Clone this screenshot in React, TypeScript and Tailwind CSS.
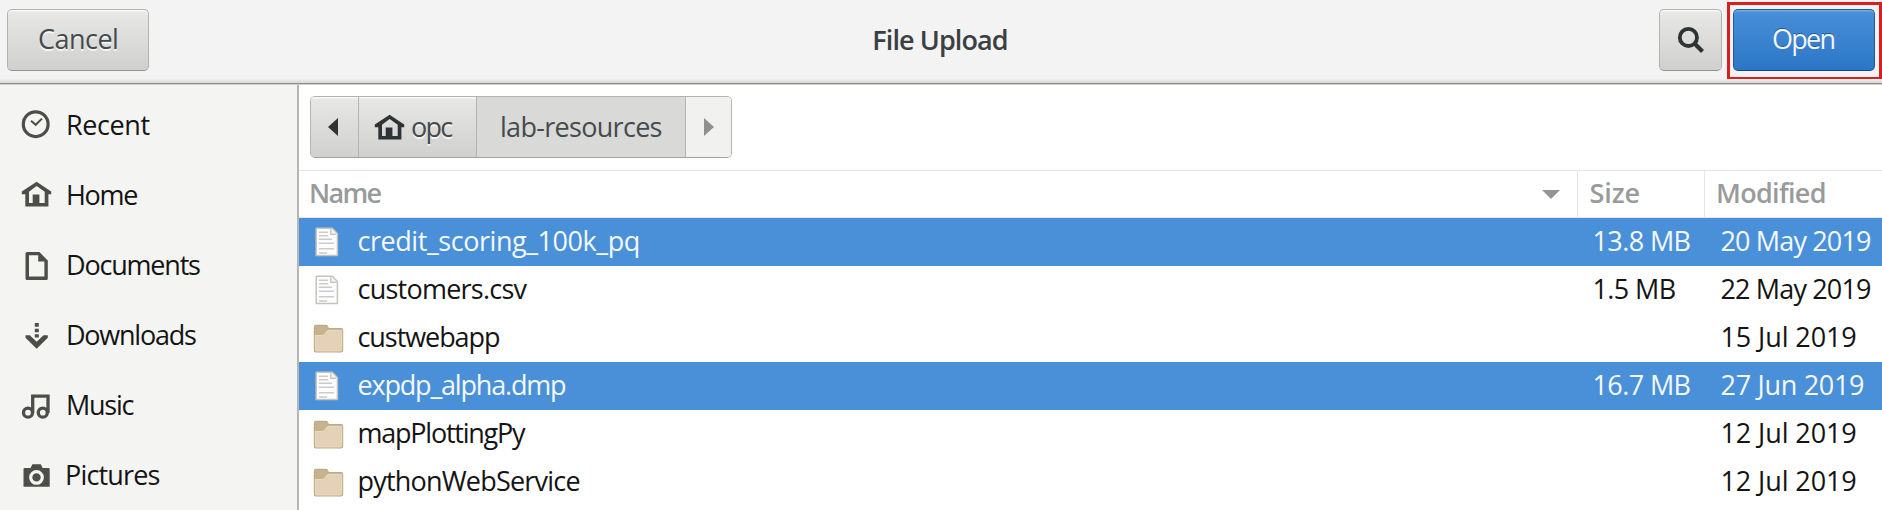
import React from "react";
import type { ReactNode } from "react";

const icon = "block h-[30px] w-[30px] shrink-0 overflow-visible";

const ClockIcon = () => (
  <svg viewBox="0 0 30 30" className={icon} fill="none" stroke="#4d4d4a">
    <circle cx="14.7" cy="15.2" r="12.4" strokeWidth="3.2" />
    <path d="M10 11.8l4.7 4L21 9.6" strokeWidth="2" />
  </svg>
);

const HomeIcon = ({ color = "#4d4d4a" }: { color?: string }) => (
  <svg viewBox="0 0 30 30" className={icon}>
    <path
      fill={color}
      fillRule="evenodd"
      d="M15.6 2.8L30.2 12.4V15.2H27.4V27.5H4.3V15.2H.8V12.4zM15.6 7L8 12.8V24H11.7V15.6H18.4V24H23.7V12.8z"
    />
  </svg>
);

const DocumentIcon = () => (
  <svg viewBox="0 0 30 30" className={icon}>
    <path fill="#4d4d4a" fillRule="evenodd" d="M6 3H18.4L26.8 11.6V29.5Q26.8 31 25.3 31H6Q4.5 31 4.5 29.5V4.5Q4.5 3 6 3zM8 6.3V27.6H23.4V12.4H17.2V6.3z" />
  </svg>
);

const DownloadIcon = () => (
  <svg viewBox="0 0 30 30" className={icon} fill="#4d4d4a">
    <path d="M13.8 3h4v3.8h-4zM13.8 8.7h4v3.6h-4zM13.8 14.2h4v3.4h-4z" />
    <path d="M4.5 15.3H8.8L15.7 21.8L22.5 15.3H26.8V17.7L15.7 28.8L4.5 17.7z" />
  </svg>
);

const MusicIcon = () => (
  <svg viewBox="0 0 30 30" className={icon} fill="none" stroke="#4d4d4a" strokeWidth="3.3">
    <circle cx="7" cy="22.7" r="4.5" />
    <circle cx="21.8" cy="22.7" r="4.5" />
    <path d="M11.7 23V6.2H27V23" />
  </svg>
);

const CameraIcon = () => (
  <svg viewBox="0 0 30 30" className={icon}>
    <path fill="#4d4d4a" d="M3.6 8H9.6L11.4 4.3H19.8L21.6 8H27.6Q28.7 8 28.7 9V26.8H2.5V9Q2.5 8 3.6 8z" />
    <circle cx="15.5" cy="17.4" r="5.8" fill="#4d4d4a" stroke="#f4f4f2" strokeWidth="3.2" />
  </svg>
);

const SearchIcon = () => (
  <svg viewBox="0 0 28 28" className="h-[28px] w-[28px]" fill="none" stroke="#2e3436">
    <circle cx="11.4" cy="11.4" r="8.6" strokeWidth="3.8" />
    <path d="M17.5 17.5L25.5 25.5" strokeWidth="4.2" />
  </svg>
);

const FileIcon = () => (
  <svg viewBox="0 0 30 30" className={icon}>
    <path d="M3.2 1.3H19.3L24.4 6.5V28.6H3.2z" fill="#fdfdfd" stroke="#c3c5bd" strokeWidth="1.5" strokeLinejoin="round" />
    <path d="M17.8 2.2V7.4H23.4" fill="#efefed" stroke="#c3c5bd" strokeWidth="1.3" />
    <path d="M6 5.3h9M6 8.8h9M6 12.3h13M6 16.3h15M6 21.8h15M6 26h8" stroke="#cbcbc9" strokeWidth="1.4" />
  </svg>
);

const FolderIcon = () => (
  <svg viewBox="0 0 30 30" className={icon}>
    <path d="M1.4 4V27Q1.4 29 3.1 29H27.9Q29.6 29 29.6 27V7.4Q29.6 5.6 27.9 5.6H15.7L14.1 3.2Q13.6 2.4 12.7 2.4H3Q1.4 2.4 1.4 4z" fill="#c7b28e" stroke="#bda985" strokeWidth="1.2" />
    <path d="M2.3 12.4H9.1Q10.5 12.4 11.3 11.4L14 8.2Q14.8 7.3 16 7.3H28.7V26.8Q28.7 28 27.5 28H3.5Q2.3 28 2.3 26.8z" fill="#e4d1b6" stroke="#ecdec9" strokeWidth="0.9" />
  </svg>
);

const places: { icon: ReactNode; label: string; style: string }[] = [
  { icon: <ClockIcon />, label: "Recent", style: "tracking-[-0.4px]" },
  { icon: <HomeIcon />, label: "Home", style: "tracking-[-1.3px]" },
  { icon: <DocumentIcon />, label: "Documents", style: "tracking-[-1.2px]" },
  { icon: <DownloadIcon />, label: "Downloads", style: "tracking-[-1.24px]" },
  { icon: <MusicIcon />, label: "Music", style: "tracking-[-1.26px]" },
  { icon: <CameraIcon />, label: "Pictures", style: "-ml-px tracking-[-0.84px]" },
];

type Entry = {
  name: string;
  nameStyle: string;
  size?: string;
  date: string;
  dateStyle: string;
  folder?: boolean;
  selected?: boolean;
};

const entries: Entry[] = [
  { name: "credit_scoring_100k_pq", nameStyle: "tracking-[-0.45px]", size: "13.8 MB", date: "20 May 2019", dateStyle: "tracking-[-0.85px]", selected: true },
  { name: "customers.csv", nameStyle: "tracking-[-0.76px]", size: "1.5 MB", date: "22 May 2019", dateStyle: "tracking-[-0.85px]" },
  { name: "custwebapp", nameStyle: "tracking-[-1.07px]", date: "15 Jul 2019", dateStyle: "tracking-[-0.1px]", folder: true },
  { name: "expdp_alpha.dmp", nameStyle: "tracking-[-1.19px]", size: "16.7 MB", date: "27 Jun 2019", dateStyle: "tracking-[-0.3px]", selected: true },
  { name: "mapPlottingPy", nameStyle: "tracking-[-1.24px]", date: "12 Jul 2019", dateStyle: "tracking-[-0.1px]", folder: true },
  { name: "pythonWebService", nameStyle: "tracking-[-0.8px]", date: "12 Jul 2019", dateStyle: "tracking-[-0.1px]", folder: true },
];

const raised = "bg-linear-to-b from-[#e8e8e6] to-[#d0d0ce]";
const button = `${raised} flex h-[62px] items-center rounded-[5px] border-[1.5px] border-[#b4b4ae] border-b-[#94948e] shadow-[inset_0_1.5px_0_#f8f8f7]`;
const columns = "grid grid-cols-[1278.5px_127px_1fr]";

export default function App() {
  return (
    <div className="flex h-[510px] w-[1882px] flex-col overflow-hidden bg-white font-['Open_Sans',sans-serif] text-[27px] leading-[36px] whitespace-nowrap text-[#141414]">
      <header className="flex h-[85px] shrink-0 flex-col bg-[#f3f3f3] text-[#3a4042]">
        <div className="grid h-[79px] grid-cols-[1fr_auto_1fr] items-start">
          <div className="pt-[9px] pl-[7px]">
            <button className={`${button} w-[142px] pb-[2px] pl-[30px] tracking-[-0.53px] text-[#454b4d] [text-shadow:0_1.5px_0_#f4f4f3]`}>Cancel</button>
          </div>
          <h1 className="pt-[22px] pr-[2px] font-semibold tracking-[-0.9px]">File Upload</h1>
          <div className="flex justify-end pt-[2px]">
            <button className={`${button} mt-[7px] mr-[5px] w-[63px] justify-center`}>
              <SearchIcon />
            </button>
            <div className="h-[78px] w-[155px] border-[3px] border-[#dc1c1e] pt-[4px] pl-[3px]">
              <button className="flex h-[62px] w-[142px] items-center rounded-[5px] border-[1.5px] border-[#1f5a9f] border-b-[#184780] bg-linear-to-b from-[#4a90d9] to-[#2a76c6] pb-[2px] pl-[38px] tracking-[-1.73px] text-[#f2f6fb] shadow-[inset_0_1.5px_0_#73abe3] [text-shadow:0_-1.5px_0_#235b98]">Open</button>
            </div>
          </div>
        </div>
        <div className="mt-auto flex h-[6px] shrink-0 flex-col">
          <div className="h-[4px] bg-linear-to-b from-[#f1f1f1] to-[#d6d6d4]" />
          <div className="h-px bg-[#8e8e8a]" />
          <div className="h-px bg-[#cfcfcb]" />
        </div>
      </header>

      <div className="flex min-h-0 grow">
        <nav className="flex w-[299px] shrink-0 flex-col border-r-2 border-[#b6b6b2] bg-[#f4f4f2] pt-[4.2px]">
          {places.map((p) => (
            <div key={p.label} className="flex h-[70.1px] shrink-0 items-center pl-[21px]">
              {p.icon}
              <span className={`pt-px pl-[15px] ${p.style}`}>{p.label}</span>
            </div>
          ))}
        </nav>

        <main className="flex min-w-0 grow flex-col">
          <div className="flex h-[85px] shrink-0 items-start pt-[10.5px] pl-[11px]">
            <div className="flex h-[62.5px] w-[422px] overflow-hidden rounded-[5px] border-[1.5px] border-[#b4b4ae] border-b-[#a2a29c] text-[#454b4d]">
              <button className={`${raised} flex w-[48px] items-center border-r-[1.5px] border-[#b4b4ae] pl-[17px] shadow-[inset_0_1.5px_0_#f8f8f7]`}>
                <svg viewBox="0 0 10 18" className="h-[18px] w-[10px]"><path d="M10 0V18L0 9z" fill="#2e3436" /></svg>
              </button>
              <button className={`${raised} flex w-[118px] items-center border-r-[1.5px] border-[#b4b4ae] pl-[15px] shadow-[inset_0_1.5px_0_#f8f8f7]`}>
                <HomeIcon color="#2e3436" />
                <span className="pl-[7px] tracking-[-1.7px] [text-shadow:0_1.5px_0_#f4f4f3]">opc</span>
              </button>
              <button className="flex w-[209px] items-center border-r-[1.5px] border-[#b4b4ae] bg-[#d9d9d7] pl-[23px] tracking-[-0.7px]">lab-resources</button>
              <button className="flex grow items-center bg-[#f1f1f0] pl-[18px]">
                <svg viewBox="0 0 10 18" className="h-[18px] w-[10px]"><path d="M0 0V18L10 9z" fill="#8d9091" /></svg>
              </button>
            </div>
          </div>

          <div className={`${columns} h-[47.5px] shrink-0 border-t-[1.5px] border-b border-[#e6e6e5] font-semibold text-[#989b9b]`}>
            <div className="flex items-center justify-between border-r-[1.5px] border-[#e6e6e5] pr-[17px] pb-[2px] pl-[10px]">
              <span className="tracking-[-1.7px]">Name</span>
              <svg viewBox="0 0 18 9" className="mt-[3px] h-[9px] w-[18px]"><path d="M0 0H18L9 9z" fill="#919595" /></svg>
            </div>
            <div className="flex items-center border-r-[1.5px] border-[#e6e6e5] pb-[2px] pl-[12px] tracking-[-0.1px]">Size</div>
            <div className="flex items-center pb-[2px] pl-[11.5px] tracking-[-0.7px]">Modified</div>
          </div>

          {entries.map((e) => (
            <div key={e.name} className={`${columns} h-[48px] shrink-0 ${e.selected ? "bg-[#4a90d9] text-[#f4f8fd]" : ""}`}>
              <div className="flex items-center pl-[14px]">
                {e.folder ? <FolderIcon /> : <FileIcon />}
                <span className={`pb-[2px] pl-[14.5px] ${e.nameStyle}`}>{e.name}</span>
              </div>
              <div className="flex items-center pb-[2px] pl-[15px] tracking-[-0.6px]">{e.size}</div>
              <div className={`flex items-center pb-[2px] pl-[16px] ${e.dateStyle}`}>{e.date}</div>
            </div>
          ))}
        </main>
      </div>
    </div>
  );
}
